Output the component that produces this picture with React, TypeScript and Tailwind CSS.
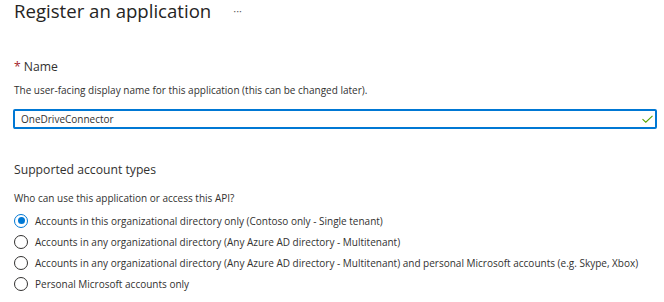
import { useState } from "react";

const accountTypes = [
  "Accounts in this organizational directory only (Contoso only - Single tenant)",
  "Accounts in any organizational directory (Any Azure AD directory - Multitenant)",
  "Accounts in any organizational directory (Any Azure AD directory - Multitenant) and personal Microsoft accounts (e.g. Skype, Xbox)",
  "Personal Microsoft accounts only",
];

export default function App() {
  const [selected, setSelected] = useState(0);
  const [name, setName] = useState("OneDriveConnector");

  return (
    <div className="h-[302px] w-[664px] overflow-hidden bg-white pl-[14px] pr-[7px] font-['Open_Sans',sans-serif] text-[#323130]">
      <div className="flex h-[22px] items-start">
        <h1 className="text-[18.6px] font-medium leading-[22px] text-[#252423]">Register an application</h1>
        <span className="ml-[22px] mt-[5px] text-[11px] leading-none text-[#605e5c]">···</span>
      </div>

      <div className="mt-[37px] flex h-[16px] items-center gap-[3px] text-[12.2px] leading-[16px]">
        <span className="text-[#a4262c]">*</span>
        <span>Name</span>
      </div>
      <p className="mt-[8px] text-[10px] leading-[14px]">
        The user-facing display name for this application (this can be changed later).
      </p>

      <div className="ml-[-1px] mt-[12px] flex h-[20px] items-center rounded-[2px] border-2 border-[#0078d4] pl-[6px] pr-[2px]">
        <input
          value={name}
          onChange={(e) => setName(e.target.value)}
          className="min-w-0 flex-1 bg-transparent text-[10px] leading-[14px] text-[#323130] outline-none"
        />
        <svg width="11" height="8" viewBox="0 0 11 8" fill="none" className="shrink-0">
          <path d="M0.5 4.2L3.8 7.2L10.5 0.8" stroke="#57a300" strokeWidth="1.1" />
        </svg>
      </div>

      <h2 className="mt-[33px] text-[12.2px] leading-[16px]">Supported account types</h2>
      <p className="mt-[13px] text-[10px] leading-[14px]">Who can use this application or access this API?</p>

      <div className="mt-[5px] flex flex-col">
        {accountTypes.map((label, i) => (
          <label
            key={label}
            className="flex h-[21px] cursor-pointer items-center gap-[7px] text-[10px] leading-[14px]"
            onClick={() => setSelected(i)}
          >
            <span
              className={
                selected === i
                  ? "flex h-[14px] w-[14px] shrink-0 items-center justify-center rounded-full border border-[#0078d4]"
                  : "flex h-[14px] w-[14px] shrink-0 items-center justify-center rounded-full border border-[#323130]"
              }
            >
              {selected === i && <span className="h-[7px] w-[7px] rounded-full bg-[#0078d4]" />}
            </span>
            <span className="whitespace-nowrap">{label}</span>
          </label>
        ))}
      </div>
    </div>
  );
}
